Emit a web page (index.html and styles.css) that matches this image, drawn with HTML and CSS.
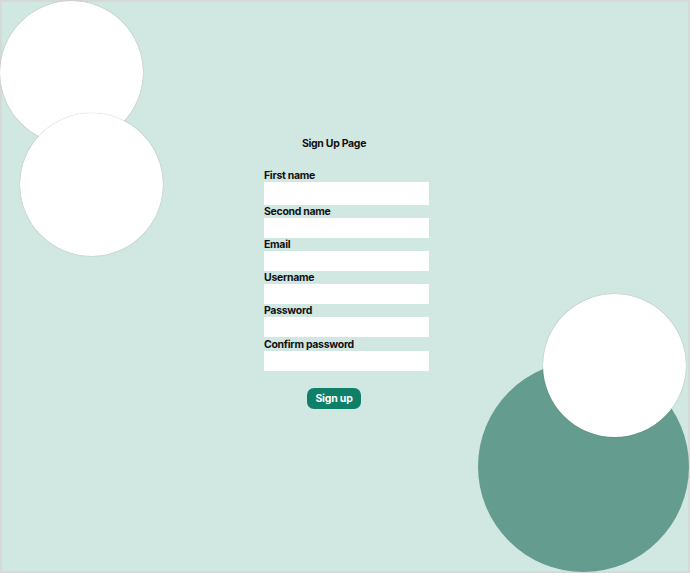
FILE: index.html
```html
<!DOCTYPE html>
<html lang="en">
<head>
<meta charset="utf-8">
<title>Sign Up Page</title>
<link rel="stylesheet" href="styles.css">
</head>
<body>
<div class="frame">
  <div class="blob blob-a"></div>
  <div class="blob blob-b"></div>
  <div class="blob blob-dark"></div>
  <div class="blob blob-c"></div>
  <form class="signup">
    <h1 class="title">Sign Up Page</h1>
    <div class="field">
      <label class="label">First name</label>
      <input class="input input-tall" type="text">
    </div>
    <div class="field">
      <label class="label">Second name</label>
      <input class="input" type="text">
    </div>
    <div class="field">
      <label class="label">Email</label>
      <input class="input" type="email">
    </div>
    <div class="field">
      <label class="label">Username</label>
      <input class="input" type="text">
    </div>
    <div class="field">
      <label class="label">Password</label>
      <input class="input" type="password">
    </div>
    <div class="field field-gap">
      <label class="label">Confirm password</label>
      <input class="input" type="password">
    </div>
    <button class="btn" type="button">Sign up</button>
  </form>
</div>
</body>
</html>
```

FILE: styles.css
```css
html, body {
  margin: 0;
  padding: 0;
  overflow: hidden;
}
body {
  width: 690px;
  height: 573px;
  font-family: Inter, "Liberation Sans", sans-serif;
}
.frame {
  position: relative;
  box-sizing: border-box;
  width: 690px;
  height: 573px;
  border: 2px solid #d7d9d8;
  background: #d1e7e1;
}
.blob {
  position: absolute;
  border-radius: 50%;
  background: #ffffff;
  box-shadow: 0 0 1px rgba(0, 0, 0, 0.35);
}
.blob-a { left: -2px; top: -1px; width: 143px; height: 143px; }
.blob-b { left: 18px; top: 111px; width: 143px; height: 143px; }
.blob-dark { left: 476px; top: 359px; width: 211px; height: 211px; background: #649c8f; box-shadow: none; }
.blob-c { left: 541px; top: 292px; width: 143px; height: 143px; }

.signup {
  position: relative;
  width: 140px;
  margin: 0 0 0 262px;
  padding-top: 135px;
  display: flex;
  flex-direction: column;
  align-items: center;
}
.title {
  margin: 0 0 18px;
  font-size: 10.5px;
  line-height: 14px;
  font-weight: 700;
  letter-spacing: -0.3px;
  color: #111;
}
.field {
  align-self: flex-start;
  display: flex;
  flex-direction: column;
  width: 165px;
}
.field-gap { margin-top: 1px; }
.label {
  font-size: 10.5px;
  line-height: 13px;
  font-weight: 700;
  letter-spacing: -0.3px;
  color: #111;
}
.input {
  box-sizing: border-box;
  width: 165px;
  height: 20px;
  margin: 0;
  padding: 0 4px;
  border: none;
  background: #ffffff;
  outline: none;
}
.input-tall { height: 23px; }
.btn {
  margin-top: 17px;
  width: 54px;
  height: 21px;
  padding: 0;
  border: none;
  border-radius: 7px;
  background: #0f7f69;
  color: #ffffff;
  font-family: Inter, "Liberation Sans", sans-serif;
  font-size: 10.5px;
  font-weight: 700;
  letter-spacing: -0.2px;
  line-height: 21px;
}
```
